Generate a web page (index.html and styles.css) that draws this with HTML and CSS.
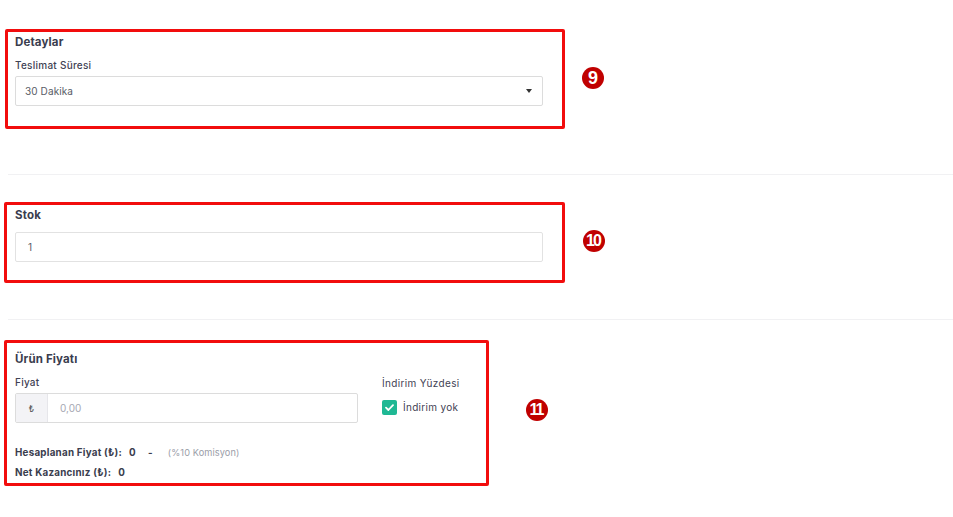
FILE: index.html
```html
<!DOCTYPE html>
<html lang="tr">
<head>
<meta charset="utf-8">
<link rel="stylesheet" href="styles.css">
</head>
<body>
<div class="page">
  <section class="row row-1">
    <div class="mark mark-1">
      <h3 class="title">Detaylar</h3>
      <label class="label">Teslimat Süresi</label>
      <div class="control select">
        <span class="value">30 Dakika</span>
        <span class="caret"></span>
      </div>
    </div>
    <span class="badge badge-1">9</span>
  </section>
  <hr class="divider divider-1">
  <section class="row row-2">
    <div class="mark mark-2">
      <h3 class="title">Stok</h3>
      <div class="control stock">
        <span class="value">1</span>
      </div>
    </div>
    <span class="badge badge-2">10</span>
  </section>
  <hr class="divider divider-2">
  <section class="row row-3">
    <div class="mark mark-3">
      <h3 class="title">Ürün Fiyatı</h3>
      <div class="price-grid">
        <div class="price-col">
          <label class="label">Fiyat</label>
          <div class="control group">
            <span class="addon">₺</span>
            <span class="placeholder">0,00</span>
          </div>
        </div>
        <div class="discount-col">
          <label class="label label-light">İndirim Yüzdesi</label>
          <div class="check-row">
            <span class="checkbox">
              <svg width="9" height="7" viewBox="0 0 9 7"><path d="M1 3.6 L3.4 6 L8 1.2" fill="none" stroke="#fff" stroke-width="1.8" stroke-linecap="round" stroke-linejoin="round"/></svg>
            </span>
            <span class="check-text">İndirim yok</span>
          </div>
        </div>
      </div>
      <div class="summary">
        <p class="sum-line"><b>Hesaplanan Fiyat (₺):</b><b class="num">0</b><b class="dash">-</b><span class="note">(%10 Komisyon)</span></p>
        <p class="sum-line"><b>Net Kazancınız (₺):</b><b class="num">0</b></p>
      </div>
    </div>
    <span class="badge badge-3">11</span>
  </section>
</div>
</body>
</html>
```

FILE: styles.css
```css
* { box-sizing: border-box; }
html, body { margin: 0; padding: 0; background: #fff; }
body {
  font-family: "Inter", "Noto Sans", sans-serif;
  color: #3f4254;
  width: 953px;
  height: 517px;
  overflow: hidden;
}
.page { padding-top: 29px; }
.row { display: flex; align-items: center; }
.mark {
  border: 3px solid #f20d0d;
  border-radius: 2px;
  display: flex;
  flex-direction: column;
}
.mark-1 { margin-left: 5px; width: 560px; height: 100px; padding: 2px 19px 0 7px; }
.mark-2 { margin-left: 4px; width: 561px; height: 81px; padding: 2px 19px 0 8px; }
.mark-3 { margin-left: 4px; width: 485px; height: 146px; padding: 8px 0 0 8px; }
.title {
  margin: 0;
  font-size: 11.5px;
  line-height: 16px;
  font-weight: 700;
  color: #3a3d4e;
  letter-spacing: 0.15px;
}
.label {
  display: block;
  font-size: 10px;
  line-height: 14px;
  font-weight: 500;
  color: #3f4254;
  letter-spacing: 0.25px;
}
.mark-1 .label { margin-top: 8px; margin-bottom: 4px; }
.control {
  height: 30px;
  border: 1px solid #dcdcdc;
  border-radius: 2px;
  display: flex;
  align-items: center;
  font-size: 10px;
  color: #555a66;
}
.select { padding: 0 10px 0 9px; justify-content: space-between; }
.value { color: #595c66; letter-spacing: 0.1px; }
.caret {
  width: 0; height: 0;
  border-left: 3.5px solid transparent;
  border-right: 3.5px solid transparent;
  border-top: 4px solid #333;
}
.stock { margin-top: 9px; padding-left: 12px; border-color: #e2e2e2; }
.price-grid { display: flex; margin-top: 8px; }
.price-col { width: 343px; }
.price-col .label { margin-bottom: 4px; }
.group { padding: 0; overflow: hidden; }
.addon {
  width: 32px; height: 100%;
  background: #f3f3f6;
  border-right: 1px solid #e6e6ea;
  display: flex; align-items: center; justify-content: center;
  font-size: 9px; color: #555;
}
.placeholder { margin-left: 12px; color: #a6a8b3; }
.discount-col { margin-left: 24px; padding-top: 1px; }
.label-light { font-weight: 400; color: #3f4254; letter-spacing: 0.35px; }
.check-row { display: flex; align-items: center; margin-top: 10px; }
.checkbox {
  width: 15px; height: 15px;
  border-radius: 2px;
  background: #1fb894;
  display: flex; align-items: center; justify-content: center;
}
.check-text { margin-left: 6px; font-size: 10px; color: #3f4254; position: relative; top: -1px; letter-spacing: 0.3px; }
.summary { margin-top: 22px; }
.sum-line {
  margin: 0 0 4px 0;
  font-size: 9.8px;
  line-height: 16px;
  color: #3a3d4e;
  display: flex;
  align-items: center;
  letter-spacing: 0.25px;
}
.sum-line b { font-weight: 700; }
.num { margin-left: 7px; }
.dash { margin-left: 12px; }
.note { margin-left: 15px; font-size: 9.2px; color: #9a9da8; letter-spacing: 0.1px; }
.badge {
  width: 22px; height: 22px;
  border-radius: 50%;
  background: #c00000;
  color: #fff;
  font-family: "Liberation Sans", Arial, sans-serif;
  font-weight: 700;
  font-size: 18px;
  display: flex; align-items: center; justify-content: center;
}
.badge-2, .badge-3 { font-size: 16px; letter-spacing: -2px; text-indent: -2px; }
.badge-1 { margin-left: 17px; margin-top: -2px; }
.badge-2 { margin-left: 18px; margin-top: -4px; }
.badge-3 { margin-left: 37px; margin-top: -6px; }
.divider {
  border: 0;
  border-top: 1px solid #f1f1f3;
  margin: 0 0 0 8px;
  height: 0;
}
.divider-1 { margin-top: 45px; margin-bottom: 27px; }
.divider-2 { margin-top: 36px; margin-bottom: 20px; }
```
